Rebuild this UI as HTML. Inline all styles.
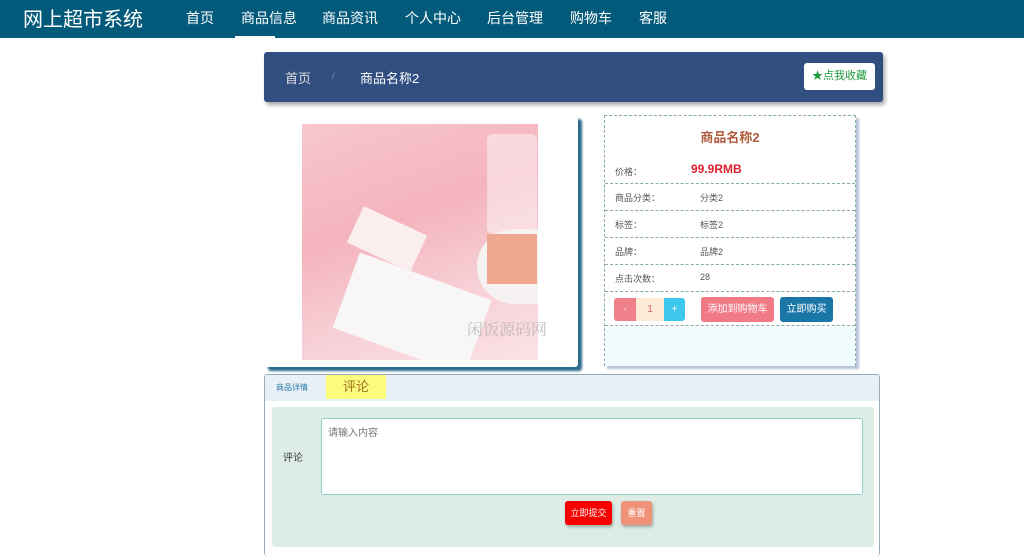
<!DOCTYPE html>
<html><head><meta charset="utf-8"><style>
*{box-sizing:border-box;margin:0;padding:0}
body{width:1024px;height:556px;overflow:hidden;background:#fff;font-family:"Liberation Sans","Noto Sans CJK SC",sans-serif;position:relative}
.nav{position:absolute;left:0;top:0;width:1024px;height:38px;background:#045a7b}
.nav .logo{position:absolute;left:23px;top:3px;font-size:20px;color:#fff}
.nav a{position:absolute;top:8px;font-size:14px;color:#fff}
.ul{position:absolute;left:235px;top:36px;width:40px;height:2px;background:#fff}
.abs{position:absolute}
.bc{left:264px;top:52px;width:619px;height:50px;background:#304f80;border-radius:3px;box-shadow:2px 3px 4px rgba(0,0,0,.35)}
.imgc{left:264px;top:115px;width:314px;height:252px;background:#fff;border-radius:3px;box-shadow:4px 4px 2px #2a6a8a}
.info{left:604px;top:115px;width:252px;height:251px;border:1px dashed #8aa;background:#fff;box-shadow:3px 3px 2px #b7c3d6}
.row{position:absolute;left:0;width:250px;border-bottom:1px dashed #8aa;font-size:9px;color:#555}
.row span{position:absolute}
.btn{position:absolute;color:#fff;font-size:10px;text-align:center;border-radius:3px}
</style></head><body>
<div class="nav"><div class="logo">网上超市系统</div>
<a style="left:186px">首页</a><a style="left:241px">商品信息</a><a style="left:322px">商品资讯</a><a style="left:405px">个人中心</a><a style="left:487px">后台管理</a><a style="left:570px">购物车</a><a style="left:639px">客服</a>
<div class="ul"></div></div>
<div class="abs bc">
<span class="abs" style="left:21px;top:16px;color:#ddd;font-size:13px">首页</span>
<span class="abs" style="left:68px;top:19px;color:#889;font-size:9px">/</span>
<span class="abs" style="left:96px;top:16px;color:#fff;font-size:13px">商品名称2</span>
<div class="abs" style="left:540px;top:11px;width:71px;height:27px;background:#fff;border-radius:3px;color:#1a9a3a;font-size:11px;line-height:27px;text-align:center">★点我收藏</div>
</div>
<div class="abs imgc">
<div class="abs" style="left:38px;top:9px;width:236px;height:236px;overflow:hidden;background:linear-gradient(160deg,#f7c7ce 0%,#f4b3bd 40%,#f7d0d6 70%,#fbe2e6 100%)">
<div class="abs" style="left:185px;top:10px;width:50px;height:100px;background:rgba(255,255,255,.45);border-radius:6px"></div>
<div class="abs" style="left:175px;top:105px;width:61px;height:75px;background:#f7f2f2;border-radius:40px 0 0 40px"></div>
<div class="abs" style="left:185px;top:110px;width:50px;height:50px;background:#f0a78f"></div>
<div class="abs" style="left:40px;top:150px;width:140px;height:80px;background:#f8f6f7;transform:rotate(20deg)"></div>
<div class="abs" style="left:50px;top:95px;width:70px;height:40px;background:#fbeeee;transform:rotate(25deg)"></div>
</div>
<span class="abs" style="left:203px;top:202px;white-space:nowrap;font-family:'Noto Serif CJK SC',serif;font-size:16px;color:rgba(170,170,170,.7)">闲饭源码网</span>
</div>
<div class="abs info">
<div class="abs" style="left:0;width:100%;text-align:center;top:11px;color:#b05a3e;font-size:13px;font-weight:bold">商品名称2</div>
<div class="row" style="top:40px;height:28px"><span style="left:10px;top:9px">价格：</span><span style="left:86px;top:6px;color:#e0202a;font-size:12px;font-weight:bold">99.9RMB</span></div>
<div class="row" style="top:68px;height:27px"><span style="left:10px;top:7px">商品分类：</span><span style="left:95px;top:7px">分类2</span></div>
<div class="row" style="top:95px;height:27px"><span style="left:10px;top:7px">标签：</span><span style="left:95px;top:7px">标签2</span></div>
<div class="row" style="top:122px;height:27px"><span style="left:10px;top:7px">品牌：</span><span style="left:95px;top:7px">品牌2</span></div>
<div class="row" style="top:149px;height:27px"><span style="left:10px;top:7px">点击次数：</span><span style="left:95px;top:7px">28</span></div>
<div class="row" style="top:176px;height:34px"></div>
<div class="btn" style="left:9px;top:182px;width:22px;height:23px;background:#f0808a;line-height:23px;border-radius:3px 0 0 3px">-</div>
<div class="btn" style="left:31px;top:182px;width:28px;height:23px;background:#fdebd8;color:#c66;line-height:23px;border-radius:0">1</div>
<div class="btn" style="left:59px;top:182px;width:21px;height:23px;background:#3fc8ee;line-height:23px;border-radius:0 3px 3px 0">+</div>
<div class="btn" style="left:96px;top:181px;width:73px;height:25px;background:#f07a86;line-height:25px">添加到购物车</div>
<div class="btn" style="left:175px;top:181px;width:53px;height:25px;background:#1b76a8;line-height:25px">立即购买</div>
<div class="abs" style="left:0;top:211px;width:250px;height:39px;background:#f0fcfd"></div>
</div>
<div class="abs" style="left:264px;top:374px;width:616px;height:182px;border:1px solid #9ab;border-bottom:none;border-radius:3px;background:#fff">
<div class="abs" style="left:0;top:0;width:614px;height:26px;background:#e7f0f6"></div>
<span class="abs" style="left:11px;top:7px;font-size:8px;color:#2a7aa8">商品详情</span>
<div class="abs" style="left:61px;top:0;width:60px;height:24px;background:#fbfb7e;color:#a07020;font-size:13px;text-align:center;line-height:23px">评论</div>
<div class="abs" style="left:7px;top:32px;width:602px;height:140px;background:#ddede6;border-radius:3px">
<span class="abs" style="left:11px;top:42px;font-size:10px;color:#333">评论</span>
<div class="abs" style="left:49px;top:11px;width:542px;height:77px;background:#fff;border:1px solid #9cc;border-radius:3px;font-size:10px;color:#777;padding:5px 6px">请输入内容</div>
<div class="btn" style="left:293px;top:94px;width:47px;height:24px;background:#f60000;line-height:24px;font-size:9px;box-shadow:1px 2px 3px rgba(0,0,0,.3)">立即提交</div>
<div class="btn" style="left:349px;top:94px;width:31px;height:24px;background:#ef9278;line-height:24px;font-size:9px;box-shadow:1px 2px 3px rgba(0,0,0,.3)">重置</div>
</div></div>
</body></html>
